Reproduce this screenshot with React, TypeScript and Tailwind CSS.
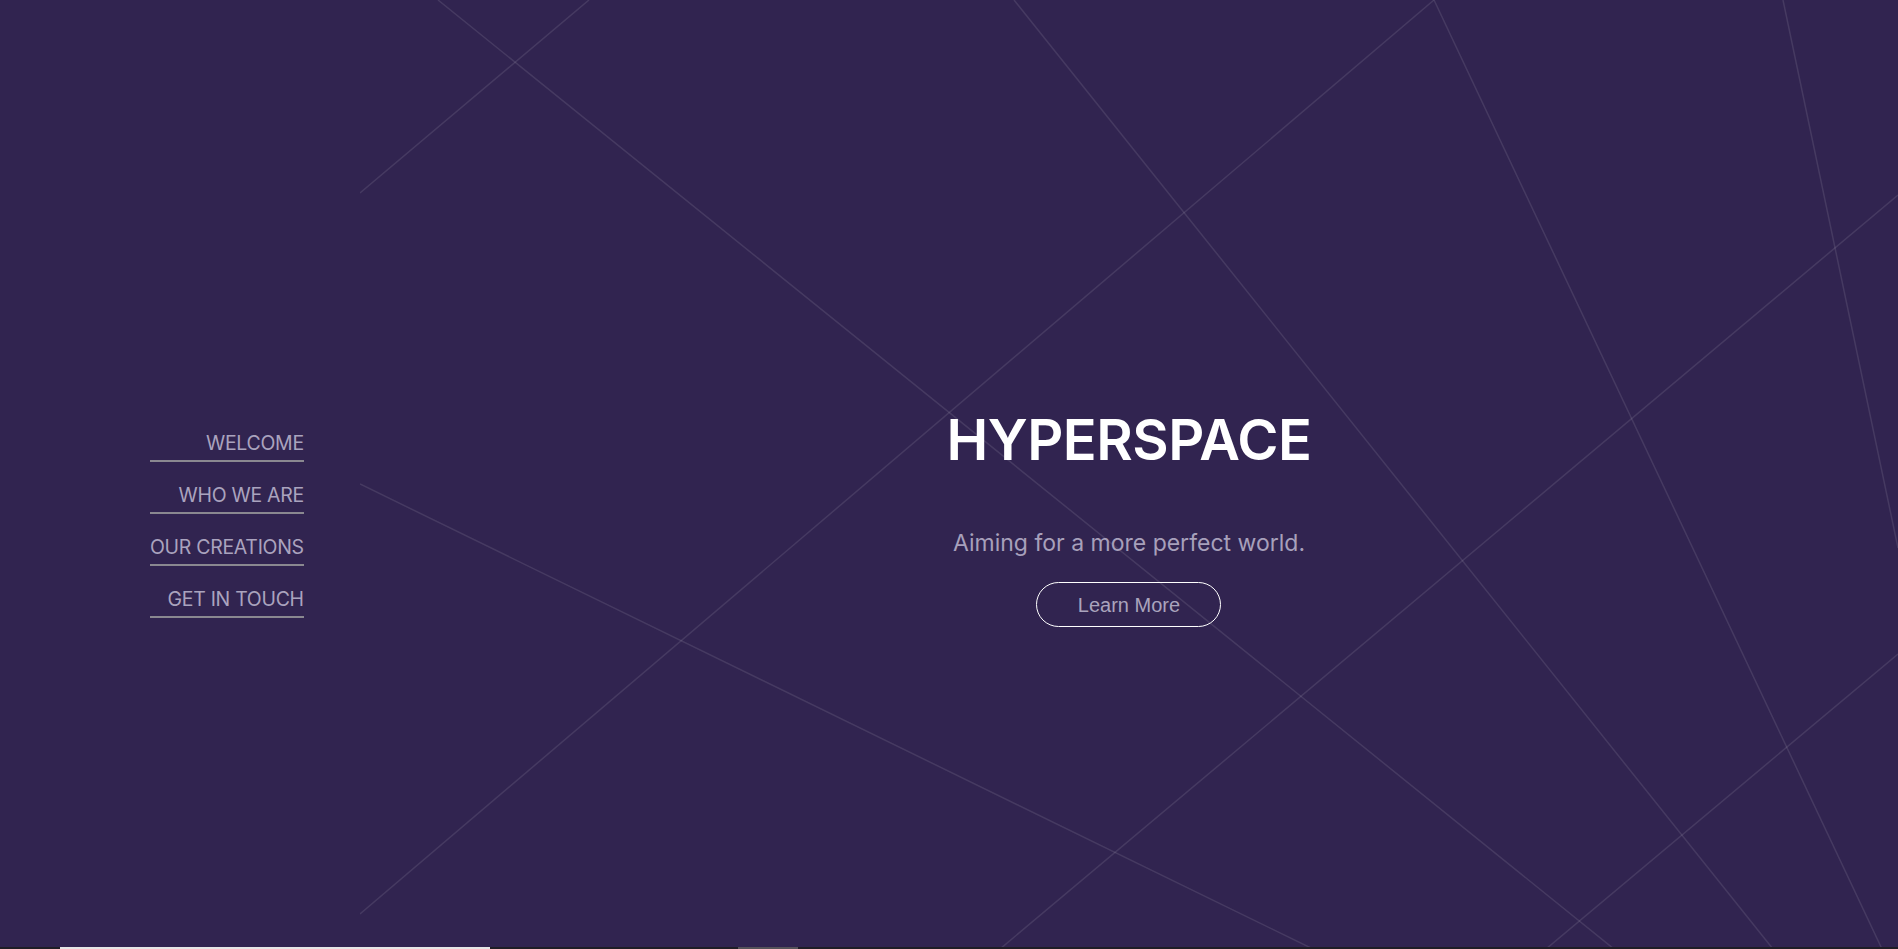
import React from "react"

const navItems = ["WELCOME", "WHO WE ARE", "OUR CREATIONS", "GET IN TOUCH"]

// background lines, coordinates relative to the content area (starts at x=360)
const lines: [number, number, number, number][] = [
  [78, 0, 1254, 949],
  [229, 0, 0, 193],
  [0, 484, 953, 949],
  [0, 914, 1074, 0],
  [654, 0, 1413, 949],
  [1538, 195, 640, 949],
  [1074, 0, 1522, 949],
  [1423, 0, 1538, 548],
  [1538, 654, 1186, 949],
]

export default function App() {
  return (
    <div
      className="flex h-[949px] w-full flex-col overflow-hidden bg-[#312450]"
      style={{ fontFamily: "Inter, 'Noto Sans', sans-serif" }}
    >
      <div className="flex h-[947px] w-full">
        {/* Sidebar */}
        <aside className="flex w-[360px] shrink-0 flex-col justify-center pl-[150px] pt-[102px]">
          <nav className="flex w-max flex-col gap-[21px]">
            {navItems.map((item) => (
              <a
                key={item}
                href="#"
                className="block whitespace-nowrap border-b-2 border-[#8a8890] pb-[5px] text-right text-[19.5px] leading-[24px] tracking-[-0.3px] text-[#aaa3be]"
              >
                {item}
              </a>
            ))}
          </nav>
        </aside>

        {/* Intro */}
        <main className="relative flex flex-1 flex-col items-center justify-center pt-[86px]">
          <svg
            className="absolute inset-0 h-full w-full"
            viewBox="0 0 1538 947"
            preserveAspectRatio="none"
          >
            {lines.map(([x1, y1, x2, y2], i) => (
              <line
                key={i}
                x1={x1}
                y1={y1}
                x2={x2}
                y2={y2}
                stroke="rgba(255,255,255,0.1)"
                strokeWidth={1.5}
              />
            ))}
          </svg>
          <div className="relative flex flex-col items-center">
            <h1 className="text-[56px] font-semibold leading-[68px] tracking-[-0.5px] text-white">HYPERSPACE</h1>
            <p className="mt-[54px] text-[23px] leading-[30px] text-[#a7a0bb]">Aiming for a more perfect world.</p>
            <button
              className="mt-[24px] h-[45px] w-[185px] rounded-full border border-white text-[20px] text-[#aaa4bd]"
              style={{ fontFamily: "'Liberation Sans', Arial, sans-serif" }}
            >
              Learn More
            </button>
          </div>
        </main>
      </div>

      {/* bottom scroll strip */}
      <div className="flex h-[2px] w-full bg-[#1f1d26]">
        <div className="ml-[60px] h-full w-[430px] bg-[#e6e6e6]" />
        <div className="ml-[248px] h-full w-[60px] bg-[#555259]" />
      </div>
    </div>
  )
}
